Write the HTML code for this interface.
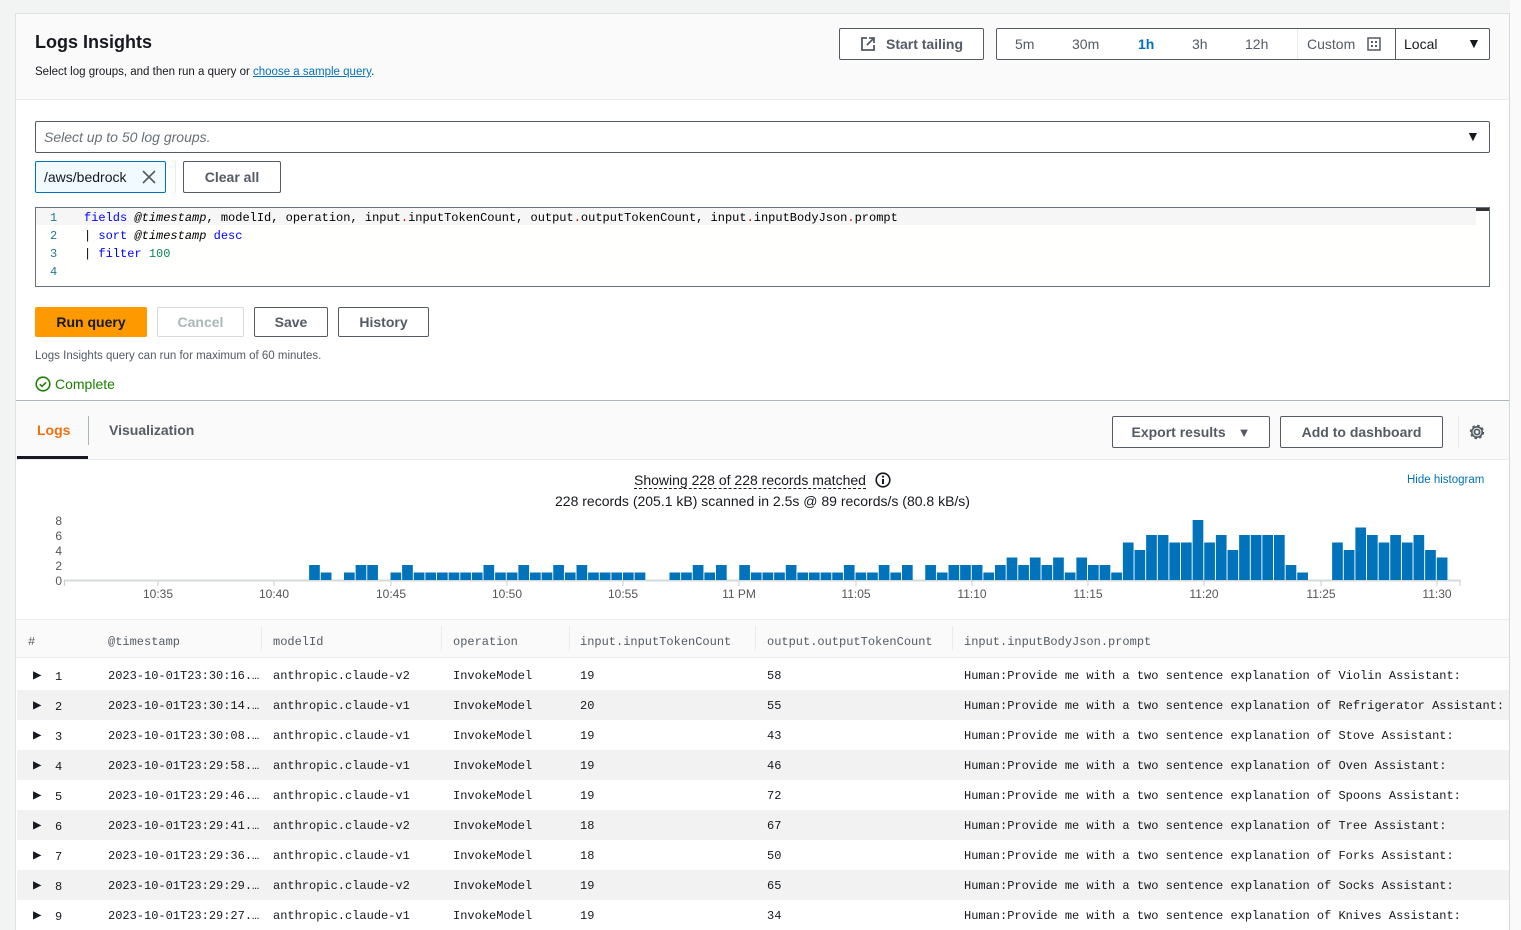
<!DOCTYPE html>
<html><head><meta charset="utf-8"><style>
*{box-sizing:border-box;margin:0;padding:0}
body{width:1521px;height:930px;overflow:hidden;background:#f2f3f3;font-family:"Liberation Sans",sans-serif;color:#16191f;position:relative}
.a{position:absolute}
.panel{left:15px;top:13px;width:1495px;height:917px;background:#fff;border-left:1px solid #e0e0e0;border-top:1px solid #e0e0e0;border-right:1px solid #d5dbdb}
.btn{position:absolute;border:1px solid #545b64;border-radius:2px;background:#fff;font-weight:bold;font-size:14px;color:#545b64;display:flex;align-items:center;justify-content:center}
.mono{font-family:"Liberation Mono",monospace;font-size:12px}
.t{position:absolute;white-space:nowrap}
.tri{font-size:14px;top:-2px}
</style></head><body>
<div class="a" style="left:1510px;top:0;width:11px;height:930px;background:#fafafa"></div>
<div class="a panel"></div>
<div class="a" style="left:16px;top:14px;width:1493px;height:86px;background:#fafafa;border-bottom:1px solid #eaeded"></div>
<div class="t" style="left:35px;top:32px;font-size:18px;font-weight:bold">Logs Insights</div>
<div class="t" style="left:35px;top:66px;font-size:11.5px">Select log groups, and then run a query or <span style="color:#0073bb;text-decoration:underline">choose a sample query</span>.</div>
<div class="btn" style="left:839px;top:28px;width:145px;height:32px;color:#545b64">
<svg width="16" height="16" viewBox="0 0 16 16" style="margin-right:10px"><path d="M7 2H2v12h12V9M9 2h5v5M14 2L7 9" fill="none" stroke="#545b64" stroke-width="1.8"/></svg>Start tailing</div>
<div class="a" style="left:996px;top:28px;width:494px;height:32px;border:1px solid #545b64;border-radius:2px;background:#fff;font-size:14px;color:#545b64">
<span class="t" style="left:18px;top:7px">5m</span>
<span class="t" style="left:75px;top:7px">30m</span>
<span class="t" style="left:141px;top:7px;color:#0073bb;font-weight:bold">1h</span>
<span class="t" style="left:195px;top:7px">3h</span>
<span class="t" style="left:248px;top:7px">12h</span>
<div class="a" style="left:300px;top:0;width:1px;height:30px;background:#eaeded"></div>
<span class="t" style="left:310px;top:7px">Custom</span>
<svg class="a" style="left:370px;top:8px" width="14" height="14" viewBox="0 0 14 14"><rect x="1" y="1" width="12" height="12" fill="none" stroke="#545b64" stroke-width="1.5"/><path d="M4 4h2v2H4zM8 4h2v2H8zM4 8h2v2H4zM8 8h2v2H8z" fill="#545b64"/></svg>
<div class="a" style="left:398px;top:0;width:1px;height:30px;background:#545b64"></div>
<span class="t" style="left:407px;top:7px;color:#16191f">Local</span>
<span class="t" style="left:470px;top:6px;font-size:14px;color:#16191f">▼</span>
</div>
<div class="a" style="left:35px;top:121px;width:1455px;height:32px;border:1px solid #545b64;border-radius:2px"></div>
<div class="t" style="left:44px;top:129px;font-size:14px;font-style:italic;color:#687078">Select up to 50 log groups.</div>
<div class="t" style="left:1466px;top:128px;font-size:14px">▼</div>
<div class="a" style="left:35px;top:161px;width:131px;height:32px;border:1px solid #0073bb;border-radius:2px;background:#f1faff"></div>
<div class="t" style="left:44px;top:169px;font-size:14px">/aws/bedrock</div>
<svg class="a" style="left:142px;top:170px" width="14" height="14" viewBox="0 0 14 14"><path d="M1 1l12 12M13 1L1 13" stroke="#545b64" stroke-width="1.6"/></svg>
<div class="a" style="left:175px;top:161px;width:1px;height:32px;background:#eaeded"></div>
<div class="btn" style="left:183px;top:161px;width:98px;height:32px">Clear all</div>
<div class="a" style="left:35px;top:207px;width:1455px;height:80px;border:1px solid #687078;background:#fffffe"></div>
<div class="a" style="left:36px;top:208px;width:1440px;height:17px;background:#f6f6f6"></div>
<div class="a" style="left:1476px;top:208px;width:13px;height:3px;background:#333"></div>
<div class="a mono" style="left:50px;top:209px;line-height:18px;color:#237893">1<br>2<br>3<br>4</div>
<div class="a mono" style="left:84px;top:209px;line-height:18px;white-space:pre;color:#000"><span style="color:#00f">fields</span> <i>@timestamp</i>, modelId, operation, input<span style="color:#d00">.</span>inputTokenCount, output<span style="color:#d00">.</span>outputTokenCount, input<span style="color:#d00">.</span>inputBodyJson<span style="color:#d00">.</span>prompt
| <span style="color:#00f">sort</span> <i>@timestamp</i> <span style="color:#00f">desc</span>
| <span style="color:#00f">filter</span> <span style="color:#098658">100</span></div>
<div class="btn" style="left:35px;top:307px;width:112px;height:30px;background:#ff9900;border-color:#ff9900;color:#16191f">Run query</div>
<div class="btn" style="left:157px;top:307px;width:87px;height:30px;border-color:#d5dbdb;color:#aab7b8">Cancel</div>
<div class="btn" style="left:254px;top:307px;width:74px;height:30px">Save</div>
<div class="btn" style="left:338px;top:307px;width:91px;height:30px">History</div>
<div class="t" style="left:35px;top:350px;font-size:11.5px;color:#545b64">Logs Insights query can run for maximum of 60 minutes.</div>
<svg class="a" style="left:35px;top:376px" width="16" height="16" viewBox="0 0 16 16"><circle cx="8" cy="8" r="6.8" fill="none" stroke="#1d8102" stroke-width="1.6"/><path d="M4.8 8.2l2.2 2.2 4-4" fill="none" stroke="#1d8102" stroke-width="1.6"/></svg>
<div class="t" style="left:55px;top:376px;font-size:14px;color:#1d8102">Complete</div>
<div class="a" style="left:16px;top:400px;width:1493px;height:60px;background:#fafafa;border-top:1px solid #aab7b8;border-bottom:1px solid #eaeded"></div>
<div class="t" style="left:37px;top:422px;font-size:14px;font-weight:bold;color:#ec7211">Logs</div>
<div class="a" style="left:17px;top:456px;width:71px;height:3px;background:#16191f"></div>
<div class="a" style="left:88px;top:416px;width:1px;height:29px;background:#aab7b8"></div>
<div class="t" style="left:109px;top:422px;font-size:14px;font-weight:bold;color:#545b64">Visualization</div>
<div class="btn" style="left:1112px;top:416px;width:158px;height:32px">Export results<span style="font-size:13px;margin-left:12px">▼</span></div>
<div class="btn" style="left:1280px;top:416px;width:163px;height:32px">Add to dashboard</div>
<div class="a" style="left:1458px;top:416px;width:1px;height:32px;background:#eaeded"></div>
<svg class="a" style="left:1468px;top:423px" width="18" height="18" viewBox="0 0 18 18"><circle cx="9" cy="9" r="2.6" fill="none" stroke="#545b64" stroke-width="1.8"/><circle cx="9" cy="9" r="6" fill="none" stroke="#545b64" stroke-width="2.4" stroke-dasharray="2.4 2.3"/><circle cx="9" cy="9" r="5.2" fill="none" stroke="#545b64" stroke-width="1.6"/></svg>
<div class="t" style="left:634px;top:472px;font-size:14px;border-bottom:1px dashed #16191f;line-height:16px">Showing 228 of 228 records matched</div>
<svg class="a" style="left:875px;top:472px" width="16" height="16" viewBox="0 0 16 16"><circle cx="8" cy="8" r="6.8" fill="none" stroke="#16191f" stroke-width="1.6"/><path d="M8 7v5" stroke="#16191f" stroke-width="2"/><circle cx="8" cy="4.6" r="1.1" fill="#16191f"/></svg>
<div class="t" style="left:555px;top:493px;font-size:14px">228 records (205.1 kB) scanned in 2.5s @ 89 records/s (80.8 kB/s)</div>
<div class="t" style="left:1407px;top:474px;font-size:11.5px;color:#0073bb">Hide histogram</div>
<svg class="a" style="left:0;top:505px" width="1510" height="100" viewBox="0 505 1510 100" font-family="Liberation Sans" font-size="12" fill="#555">
<g text-anchor="end"><text x="62" y="525">8</text><text x="62" y="540">6</text><text x="62" y="555">4</text><text x="62" y="570">2</text><text x="62" y="585">0</text></g>
<line x1="64" y1="580.5" x2="1461" y2="580.5" stroke="#d5dbdb" stroke-width="2"/>
<line x1="64.5" y1="580" x2="64.5" y2="586" stroke="#ccc"/>
<g text-anchor="middle"><text x="158" y="598">10:35</text><text x="274" y="598">10:40</text><text x="391" y="598">10:45</text><text x="507" y="598">10:50</text><text x="623" y="598">10:55</text><text x="739" y="598">11 PM</text><text x="856" y="598">11:05</text><text x="972" y="598">11:10</text><text x="1088" y="598">11:15</text><text x="1204" y="598">11:20</text><text x="1321" y="598">11:25</text><text x="1437" y="598">11:30</text></g>
<g stroke="#ccc"><line x1="158" y1="581" x2="158" y2="586"/><line x1="274" y1="581" x2="274" y2="586"/><line x1="391" y1="581" x2="391" y2="586"/><line x1="507" y1="581" x2="507" y2="586"/><line x1="623" y1="581" x2="623" y2="586"/><line x1="739" y1="581" x2="739" y2="586"/><line x1="856" y1="581" x2="856" y2="586"/><line x1="972" y1="581" x2="972" y2="586"/><line x1="1088" y1="581" x2="1088" y2="586"/><line x1="1204" y1="581" x2="1204" y2="586"/><line x1="1321" y1="581" x2="1321" y2="586"/><line x1="1437" y1="581" x2="1437" y2="586"/><line x1="1460" y1="581" x2="1460" y2="586"/></g>
<g transform="translate(41.75,580) scale(11.625,-7.5)" fill="#0073bb">
<rect x="23" width="0.92" height="2"/><rect x="24" width="0.92" height="1"/><rect x="26" width="0.92" height="1"/><rect x="27" width="0.92" height="2"/><rect x="28" width="0.92" height="2"/><rect x="30" width="0.92" height="1"/><rect x="31" width="0.92" height="2"/><rect x="32" width="0.92" height="1"/><rect x="33" width="0.92" height="1"/><rect x="34" width="0.92" height="1"/><rect x="35" width="0.92" height="1"/><rect x="36" width="0.92" height="1"/><rect x="37" width="0.92" height="1"/><rect x="38" width="0.92" height="2"/><rect x="39" width="0.92" height="1"/><rect x="40" width="0.92" height="1"/><rect x="41" width="0.92" height="2"/><rect x="42" width="0.92" height="1"/><rect x="43" width="0.92" height="1"/><rect x="44" width="0.92" height="2"/><rect x="45" width="0.92" height="1"/><rect x="46" width="0.92" height="2"/><rect x="47" width="0.92" height="1"/><rect x="48" width="0.92" height="1"/><rect x="49" width="0.92" height="1"/><rect x="50" width="0.92" height="1"/><rect x="51" width="0.92" height="1"/>
<rect x="54" width="0.92" height="1"/><rect x="55" width="0.92" height="1"/><rect x="56" width="0.92" height="2"/><rect x="57" width="0.92" height="1"/><rect x="58" width="0.92" height="2"/><rect x="60" width="0.92" height="2"/><rect x="61" width="0.92" height="1"/><rect x="62" width="0.92" height="1"/><rect x="63" width="0.92" height="1"/><rect x="64" width="0.92" height="2"/><rect x="65" width="0.92" height="1"/><rect x="66" width="0.92" height="1"/><rect x="67" width="0.92" height="1"/><rect x="68" width="0.92" height="1"/><rect x="69" width="0.92" height="2"/><rect x="70" width="0.92" height="1"/><rect x="71" width="0.92" height="1"/><rect x="72" width="0.92" height="2"/><rect x="73" width="0.92" height="1"/><rect x="74" width="0.92" height="2"/>
<rect x="76" width="0.92" height="2"/><rect x="77" width="0.92" height="1"/><rect x="78" width="0.92" height="2"/><rect x="79" width="0.92" height="2"/><rect x="80" width="0.92" height="2"/><rect x="81" width="0.92" height="1"/><rect x="82" width="0.92" height="2"/><rect x="83" width="0.92" height="3"/><rect x="84" width="0.92" height="2"/><rect x="85" width="0.92" height="3"/><rect x="86" width="0.92" height="2"/><rect x="87" width="0.92" height="3"/><rect x="88" width="0.92" height="1"/><rect x="89" width="0.92" height="3"/><rect x="90" width="0.92" height="2"/><rect x="91" width="0.92" height="2"/><rect x="92" width="0.92" height="1"/><rect x="93" width="0.92" height="5"/><rect x="94" width="0.92" height="4"/><rect x="95" width="0.92" height="6"/><rect x="96" width="0.92" height="6"/><rect x="97" width="0.92" height="5"/><rect x="98" width="0.92" height="5"/><rect x="99" width="0.92" height="8"/><rect x="100" width="0.92" height="5"/><rect x="101" width="0.92" height="6"/><rect x="102" width="0.92" height="4"/><rect x="103" width="0.92" height="6"/><rect x="104" width="0.92" height="6"/><rect x="105" width="0.92" height="6"/><rect x="106" width="0.92" height="6"/><rect x="107" width="0.92" height="2"/><rect x="108" width="0.92" height="1"/>
<rect x="111" width="0.92" height="5"/><rect x="112" width="0.92" height="4"/><rect x="113" width="0.92" height="7"/><rect x="114" width="0.92" height="6"/><rect x="115" width="0.92" height="5"/><rect x="116" width="0.92" height="6"/><rect x="117" width="0.92" height="5"/><rect x="118" width="0.92" height="6"/><rect x="119" width="0.92" height="4"/><rect x="120" width="0.92" height="3"/>
</g></svg>
<div class="a" style="left:16px;top:619px;width:1493px;height:39px;background:#fafafa;border-top:1px solid #eaeded;border-bottom:1px solid #eaeded"></div>
<div class="a mono" style="left:0;top:635px;color:#545b64">
<span class="t" style="left:28px">#</span><span class="t" style="left:108px">@timestamp</span><span class="t" style="left:273px">modelId</span><span class="t" style="left:453px">operation</span><span class="t" style="left:580px">input.inputTokenCount</span><span class="t" style="left:767px">output.outputTokenCount</span><span class="t" style="left:964px">input.inputBodyJson.prompt</span>
</div>
<div class="a" style="left:261px;top:626px;width:1px;height:25px;background:#eaeded"></div>
<div class="a" style="left:441px;top:626px;width:1px;height:25px;background:#eaeded"></div>
<div class="a" style="left:569px;top:626px;width:1px;height:25px;background:#eaeded"></div>
<div class="a" style="left:755px;top:626px;width:1px;height:25px;background:#eaeded"></div>
<div class="a" style="left:952px;top:626px;width:1px;height:25px;background:#eaeded"></div>
<div class="a" style="left:17px;top:690px;width:1492px;height:30px;background:#f2f2f2"></div>
<div class="a" style="left:17px;top:750px;width:1492px;height:30px;background:#f2f2f2"></div>
<div class="a" style="left:17px;top:810px;width:1492px;height:30px;background:#f2f2f2"></div>
<div class="a" style="left:17px;top:870px;width:1492px;height:30px;background:#f2f2f2"></div>
<div class="a mono" style="left:0;top:669px;width:1521px;color:#16191f">
<div class="a" style="top:0"><span class="t tri" style="left:33px">▶</span><span class="t" style="left:55px;top:1px">1</span><span class="t" style="left:108px">2023-10-01T23:30:16.…</span><span class="t" style="left:273px">anthropic.claude-v2</span><span class="t" style="left:453px">InvokeModel</span><span class="t" style="left:580px">19</span><span class="t" style="left:767px">58</span><span class="t" style="left:964px">Human:Provide me with a two sentence explanation of Violin Assistant:</span></div>
<div class="a" style="top:30px"><span class="t tri" style="left:33px">▶</span><span class="t" style="left:55px;top:1px">2</span><span class="t" style="left:108px">2023-10-01T23:30:14.…</span><span class="t" style="left:273px">anthropic.claude-v1</span><span class="t" style="left:453px">InvokeModel</span><span class="t" style="left:580px">20</span><span class="t" style="left:767px">55</span><span class="t" style="left:964px">Human:Provide me with a two sentence explanation of Refrigerator Assistant:</span></div>
<div class="a" style="top:60px"><span class="t tri" style="left:33px">▶</span><span class="t" style="left:55px;top:1px">3</span><span class="t" style="left:108px">2023-10-01T23:30:08.…</span><span class="t" style="left:273px">anthropic.claude-v1</span><span class="t" style="left:453px">InvokeModel</span><span class="t" style="left:580px">19</span><span class="t" style="left:767px">43</span><span class="t" style="left:964px">Human:Provide me with a two sentence explanation of Stove Assistant:</span></div>
<div class="a" style="top:90px"><span class="t tri" style="left:33px">▶</span><span class="t" style="left:55px;top:1px">4</span><span class="t" style="left:108px">2023-10-01T23:29:58.…</span><span class="t" style="left:273px">anthropic.claude-v1</span><span class="t" style="left:453px">InvokeModel</span><span class="t" style="left:580px">19</span><span class="t" style="left:767px">46</span><span class="t" style="left:964px">Human:Provide me with a two sentence explanation of Oven Assistant:</span></div>
<div class="a" style="top:120px"><span class="t tri" style="left:33px">▶</span><span class="t" style="left:55px;top:1px">5</span><span class="t" style="left:108px">2023-10-01T23:29:46.…</span><span class="t" style="left:273px">anthropic.claude-v1</span><span class="t" style="left:453px">InvokeModel</span><span class="t" style="left:580px">19</span><span class="t" style="left:767px">72</span><span class="t" style="left:964px">Human:Provide me with a two sentence explanation of Spoons Assistant:</span></div>
<div class="a" style="top:150px"><span class="t tri" style="left:33px">▶</span><span class="t" style="left:55px;top:1px">6</span><span class="t" style="left:108px">2023-10-01T23:29:41.…</span><span class="t" style="left:273px">anthropic.claude-v2</span><span class="t" style="left:453px">InvokeModel</span><span class="t" style="left:580px">18</span><span class="t" style="left:767px">67</span><span class="t" style="left:964px">Human:Provide me with a two sentence explanation of Tree Assistant:</span></div>
<div class="a" style="top:180px"><span class="t tri" style="left:33px">▶</span><span class="t" style="left:55px;top:1px">7</span><span class="t" style="left:108px">2023-10-01T23:29:36.…</span><span class="t" style="left:273px">anthropic.claude-v1</span><span class="t" style="left:453px">InvokeModel</span><span class="t" style="left:580px">18</span><span class="t" style="left:767px">50</span><span class="t" style="left:964px">Human:Provide me with a two sentence explanation of Forks Assistant:</span></div>
<div class="a" style="top:210px"><span class="t tri" style="left:33px">▶</span><span class="t" style="left:55px;top:1px">8</span><span class="t" style="left:108px">2023-10-01T23:29:29.…</span><span class="t" style="left:273px">anthropic.claude-v2</span><span class="t" style="left:453px">InvokeModel</span><span class="t" style="left:580px">19</span><span class="t" style="left:767px">65</span><span class="t" style="left:964px">Human:Provide me with a two sentence explanation of Socks Assistant:</span></div>
<div class="a" style="top:240px"><span class="t tri" style="left:33px">▶</span><span class="t" style="left:55px;top:1px">9</span><span class="t" style="left:108px">2023-10-01T23:29:27.…</span><span class="t" style="left:273px">anthropic.claude-v1</span><span class="t" style="left:453px">InvokeModel</span><span class="t" style="left:580px">19</span><span class="t" style="left:767px">34</span><span class="t" style="left:964px">Human:Provide me with a two sentence explanation of Knives Assistant:</span></div>
</div>
</body></html>
